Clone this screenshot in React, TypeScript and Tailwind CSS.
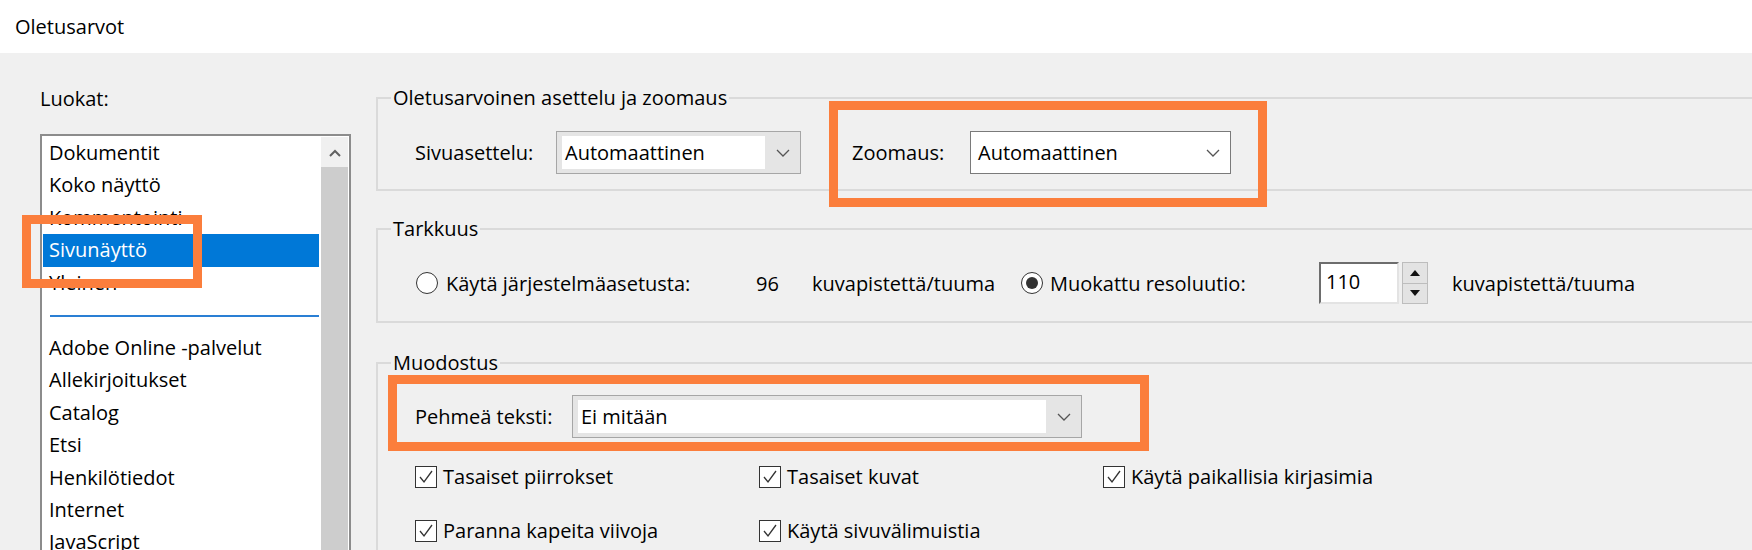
import React from "react";

const categoriesTop = ["Dokumentit", "Koko näyttö", "Kommentointi", "Sivunäyttö", "Yleinen"];
const categoriesRest = [
  "Adobe Online -palvelut",
  "Allekirjoitukset",
  "Catalog",
  "Etsi",
  "Henkilötiedot",
  "Internet",
  "JavaScript",
  "Kieli",
];

const ChevronDown = () => (
  <svg width="14" height="8" viewBox="0 0 14 8" fill="none">
    <polyline points="1,1 7,7 13,1" stroke="#555" strokeWidth="1.3" />
  </svg>
);

const ChevronUp = () => (
  <svg width="12" height="8" viewBox="0 0 12 8" fill="none">
    <polyline points="1,7 6,2 11,7" stroke="#606060" strokeWidth="2" />
  </svg>
);

// gray "drop down list" combobox with white value field
const DropList = ({ value, width }: { value: string; width: string }) => (
  <div className={`flex h-[43px] ${width} items-stretch border border-[#a6a6a6] bg-[#e5e5e5] py-[4px] pl-[5px]`}>
    <div className="flex flex-1 items-center bg-white px-[3px]">{value}</div>
    <div className="flex w-[35px] items-center justify-center">
      <ChevronDown />
    </div>
  </div>
);

const Radio = ({ checked }: { checked?: boolean }) => (
  <span className="flex h-[22px] w-[22px] shrink-0 items-center justify-center rounded-full border-[1.5px] border-[#333] bg-white">
    {checked && <span className="h-[12px] w-[12px] rounded-full bg-[#333]" />}
  </span>
);

const Check = ({ label }: { label: string }) => (
  <div className="flex items-center gap-[6px]">
    <span className="flex h-[22px] w-[22px] shrink-0 items-center justify-center border-[1.5px] border-[#333] bg-white">
      <svg width="16" height="14" viewBox="0 0 16 14" fill="none">
        <polyline points="2,7 6,12 14,1" stroke="#333" strokeWidth="1.3" />
      </svg>
    </span>
    <span>{label}</span>
  </div>
);

const SpinArrow = ({ up }: { up?: boolean }) => (
  <svg width="10" height="6" viewBox="0 0 10 6">
    <polygon points={up ? "0,6 5,0 10,6" : "0,0 5,6 10,0"} fill="#111" />
  </svg>
);

const GroupBox = ({ title, className, children }: { title: string; className?: string; children: React.ReactNode }) => (
  <fieldset className={`border-2 border-[#dadada] ${className ?? ""}`}>
    <legend className="ml-[13px] px-[2px] leading-[27px]">{title}</legend>
    {children}
  </fieldset>
);

export default function App() {
  return (
    <div
      className="relative h-[550px] w-[1752px] overflow-hidden bg-[#f0f0f0] text-[20px] leading-[27px] text-black"
      style={{ fontFamily: "'Open Sans', 'Noto Sans', sans-serif" }}
    >
      {/* window title */}
      <div className="flex h-[53px] items-center bg-white pl-[15px]">Oletusarvot</div>

      <div className="flex h-[497px] overflow-hidden">
        {/* categories */}
        <div className="w-[351px] shrink-0 pl-[40px] pt-[32px]">
          <div>Luokat:</div>
          <div className="mt-[22px] flex h-[440px] border-2 border-[#8c8c8c] bg-white p-[1px]">
            <div className="flex-1">
              {categoriesTop.map((c) => (
                <div
                  key={c}
                  className={`px-[6px] leading-[32.4px] ${c === "Sivunäyttö" ? "mr-[2px] bg-[#0078d7] text-white" : ""}`}
                >
                  {c}
                </div>
              ))}
              <div className="flex h-[33px] items-center pl-[7px] pr-[2px]">
                <div className="h-[2px] w-full bg-[#2a7fd4]" />
              </div>
              {categoriesRest.map((c) => (
                <div key={c} className="px-[6px] leading-[32.4px]">
                  {c}
                </div>
              ))}
            </div>
            <div className="flex w-[27px] flex-col bg-[#f0f0f0]">
              <div className="flex h-[30px] items-center justify-center pt-[1px]">
                <ChevronUp />
              </div>
              <div className="flex-1 bg-[#cdcdcd]" />
            </div>
          </div>
        </div>

        {/* settings */}
        <div className="ml-[25px] w-[1420px] shrink-0 pt-[31px]">
          <GroupBox title="Oletusarvoinen asettelu ja zoomaus">
            <div className="flex items-center pb-[15px] pl-[37px] pt-[20px]">
              <span className="w-[141px]">Sivuasettelu:</span>
              <DropList value="Automaattinen" width="w-[245px]" />
              <span className="ml-[51px] w-[118px]">Zoomaus:</span>
              <div className="flex h-[43px] w-[261px] items-center justify-between border border-[#7a7a7a] bg-white pl-[7px] pr-[10px]">
                <span>Automaattinen</span>
                <ChevronDown />
              </div>
            </div>
          </GroupBox>

          <GroupBox title="Tarkkuus" className="mt-[24px]">
            <div className="flex items-center pb-[17px] pl-[38px] pt-[20px]">
              <Radio />
              <span className="ml-[8px] w-[310px]">Käytä järjestelmäasetusta:</span>
              <span className="w-[56px]">96</span>
              <span className="w-[209px]">kuvapistettä/tuuma</span>
              <Radio checked />
              <span className="ml-[7px] w-[269px]">Muokattu resoluutio:</span>
              <div className="flex h-[42px] w-[80px] items-start border-2 border-b-[#e3e3e3] border-l-[#6d6d6d] border-r-[#e3e3e3] border-t-[#6d6d6d] bg-white pl-[5px] pt-[4px]">
                110
              </div>
              <div className="ml-[3px] flex h-[42px] w-[26px] flex-col">
                <div className="flex flex-1 items-center justify-center border border-[#bdbdbd] bg-[#e3e3e3]">
                  <SpinArrow up />
                </div>
                <div className="flex flex-1 items-center justify-center border border-t-0 border-[#bdbdbd] bg-[#e3e3e3]">
                  <SpinArrow />
                </div>
              </div>
              <span className="ml-[24px]">kuvapistettä/tuuma</span>
            </div>
          </GroupBox>

          <GroupBox title="Muodostus" className="mt-[26px] h-[300px]">
            <div className="pl-[37px] pt-[19px]">
              <div className="flex items-center">
                <span className="w-[157px]">Pehmeä teksti:</span>
                <DropList value="Ei mitään" width="w-[510px]" />
              </div>
              <div className="mt-[25px] grid grid-cols-[344px_344px_344px] gap-y-[27px]">
                <Check label="Tasaiset piirrokset" />
                <Check label="Tasaiset kuvat" />
                <Check label="Käytä paikallisia kirjasimia" />
                <Check label="Paranna kapeita viivoja" />
                <Check label="Käytä sivuvälimuistia" />
              </div>
            </div>
          </GroupBox>
        </div>
      </div>

      {/* highlight frames */}
      <div className="pointer-events-none absolute left-[22px] top-[215px] h-[73px] w-[180px] border-[9px] border-[#fb7e3c]" />
      <div className="pointer-events-none absolute left-[829px] top-[101px] h-[106px] w-[438px] border-[9px] border-[#fb7e3c]" />
      <div className="pointer-events-none absolute left-[388px] top-[375px] h-[76px] w-[761px] border-[9px] border-[#fb7e3c]" />
    </div>
  );
}
